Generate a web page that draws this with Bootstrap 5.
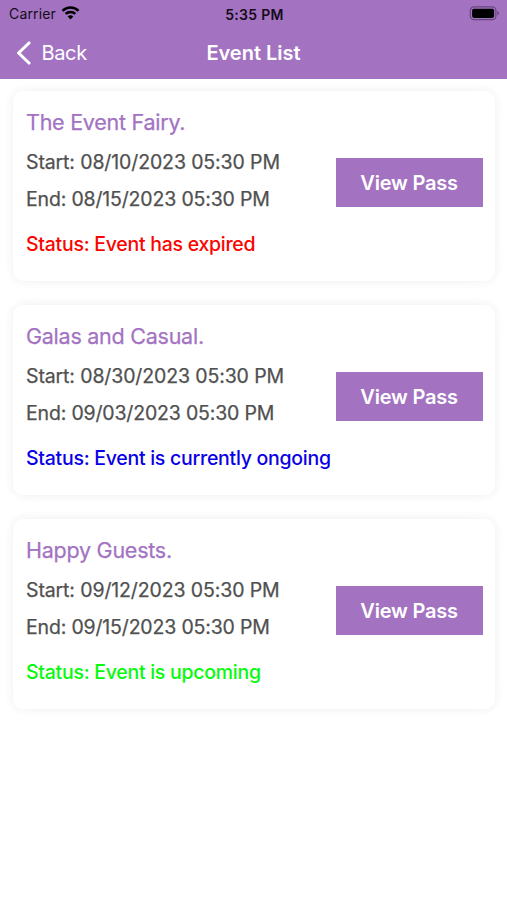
<!DOCTYPE html>
<html lang="en">
<head>
<meta charset="utf-8">
<meta name="viewport" content="width=device-width, initial-scale=1">
<title>Event List</title>
<link rel="stylesheet" href="https://cdn.jsdelivr.net/npm/bootstrap@5.3.0/dist/css/bootstrap.min.css">
<style>
  body { font-family: Inter, "Liberation Sans", sans-serif; background: #fff; min-height: 900px; overflow: hidden; }
  .app-head { background: #a373c2; height: 79px; }
  .status-bar { height: 27px; padding: 0 7px 0 9px; color: #150c1a; }
  .carrier { font-size: 14px; letter-spacing: .15px; }
  .wifi { margin-left: 5.5px; margin-top: -1px; }
  .clock { font-size: 14px; letter-spacing: .3px; padding-top: 1px; }
  .title-bar { height: 51px; padding: 0 16px; }
  .back-link { font-size: 20px; letter-spacing: -.35px; gap: 10.5px; }
  .page-title { font-size: 20px; letter-spacing: 0; }
  .side { flex: 1 1 0; }
  .event-list { padding: 12.4px 12px 0 13px; gap: 24.4px; }
  .event-card { height: 189.5px; border-radius: 10px; background: #fff; padding: 0 12.5px 0 13px; box-shadow: 0 0 10px rgba(0,0,0,.06), 0 0 20px rgba(0,0,0,.018); }
  .event-name { font-size: 21.5px; line-height: 26px; font-weight: 400; color: #a373c2; letter-spacing: -.25px; margin: 17.8px 0 14px; -webkit-text-stroke: .25px currentColor; }
  .event-line { font-size: 19.5px; line-height: 26px; color: #505050; letter-spacing: -.12px; white-space: nowrap; -webkit-text-stroke: .25px currentColor; }
  .event-end { margin-top: 10.6px; letter-spacing: -.17px; }
  .event-state { margin-top: 19.6px; font-size: 19.5px; line-height: 26px; letter-spacing: -.27px; white-space: nowrap; }
  .state-expired { color: #fa0500; }
  .state-ongoing { color: #0a00e6; }
  .state-upcoming { color: #06fa0c; }
  .event-info { width: 310px; }
  .pass-btn, .pass-btn:hover { background: #a373c2; color: #fff; border: 0; border-radius: 0; width: 147px; height: 49px; font-size: 20px; letter-spacing: -.2px; padding: 1px 0 0; margin: 67px 0 0 auto; }
</style>
<script src="https://cdn.jsdelivr.net/npm/bootstrap@5.3.0/dist/js/bootstrap.bundle.min.js"></script>
</head>
<body>
<header class="app-head">
  <div class="status-bar d-flex align-items-center">
    <div class="side d-flex align-items-center">
      <span class="carrier">Carrier</span>
      <svg class="wifi" width="19" height="14" viewBox="0 0 20 15" fill="none" stroke="#000" stroke-width="2.7"><path d="M1.4 5.2a12.2 12.2 0 0 1 17.2 0M4.8 8.5a7.3 7.3 0 0 1 10.4 0"/><path d="M10 14.4 7 11.3a4.2 4.2 0 0 1 6 0z" fill="#000" stroke="none"/></svg>
    </div>
    <span class="clock fw-semibold">5:35 PM</span>
    <div class="side d-flex justify-content-end">
      <svg width="31" height="15" viewBox="0 0 31 15"><rect x="1.3" y=".9" width="25.6" height="12.8" rx="3.6" fill="none" stroke="#68467c" stroke-width="1.2"/><rect x="3.1" y="2.7" width="22" height="9.2" rx="1.8"/><path d="M28.4 5.1c2.1.8 2.1 3.6 0 4.4z" fill="#68467c"/></svg>
    </div>
  </div>
  <nav class="title-bar d-flex align-items-center text-white">
    <a href="#" class="side back-link d-flex align-items-center text-white text-decoration-none">
      <svg width="15" height="24" viewBox="0 0 15 24" fill="none" stroke="#fff" stroke-width="3.1" stroke-linecap="round" stroke-linejoin="round"><path d="M13 2 2.6 12 13 22"/></svg>
      <span>Back</span>
    </a>
    <h1 class="page-title fw-semibold m-0">Event List</h1>
    <div class="side"></div>
  </nav>
</header>
<main class="event-list d-flex flex-column">
  <article class="event-card d-flex">
    <div class="event-info"><h2 class="event-name">The Event Fairy.</h2><div class="event-line">Start: 08/10/2023 05:30 PM</div><div class="event-line event-end">End: 08/15/2023 05:30 PM</div><div class="event-state fw-medium state-expired">Status: Event has expired</div></div>
    <button type="button" class="btn pass-btn fw-semibold">View Pass</button>
  </article>
  <article class="event-card d-flex">
    <div class="event-info"><h2 class="event-name">Galas and Casual.</h2><div class="event-line">Start: 08/30/2023 05:30 PM</div><div class="event-line event-end">End: 09/03/2023 05:30 PM</div><div class="event-state fw-medium state-ongoing">Status: Event is currently ongoing</div></div>
    <button type="button" class="btn pass-btn fw-semibold">View Pass</button>
  </article>
  <article class="event-card d-flex">
    <div class="event-info"><h2 class="event-name">Happy Guests.</h2><div class="event-line">Start: 09/12/2023 05:30 PM</div><div class="event-line event-end">End: 09/15/2023 05:30 PM</div><div class="event-state fw-medium state-upcoming">Status: Event is upcoming</div></div>
    <button type="button" class="btn pass-btn fw-semibold">View Pass</button>
  </article>
</main>
</body>
</html>
